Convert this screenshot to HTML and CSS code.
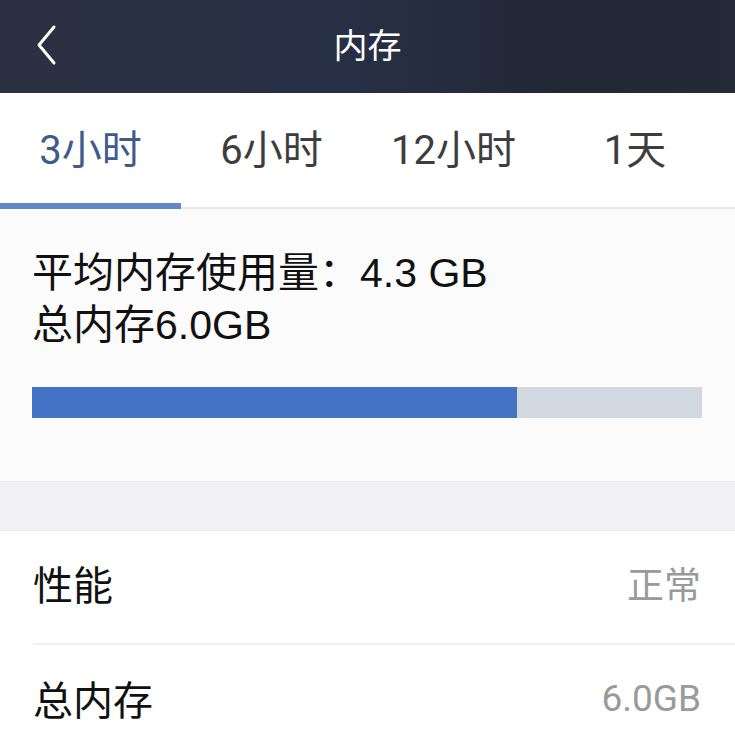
FILE: index.html
```html
<!DOCTYPE html>
<html lang="zh">
<head>
<meta charset="utf-8">
<title>内存</title>
<link rel="stylesheet" href="styles.css">
</head>
<body>
<div class="page">
  <header class="topbar">
    <span class="back">
      <svg width="24" height="42" viewBox="0 0 24 42"><path d="M19 3 L4 21 L19 39" fill="none" stroke="#ffffff" stroke-width="3" stroke-linecap="round" stroke-linejoin="round"/></svg>
    </span>
    <h1 class="title">内存</h1>
  </header>
  <nav class="tabs">
    <div class="tab active">3小时</div>
    <div class="tab">6小时</div>
    <div class="tab">12小时</div>
    <div class="tab">1天</div>
  </nav>
  <section class="summary">
    <p class="line">平均内存使用量：4.3 GB</p>
    <p class="line">总内存6.0GB</p>
    <div class="bar"><div class="fill" style="width:72.4%"></div></div>
  </section>
  <div class="gap"></div>
  <ul class="list">
    <li class="row"><span class="label">性能</span><span class="value">正常</span></li>
    <li class="row"><span class="label">总内存</span><span class="value">6.0GB</span></li>
  </ul>
</div>
</body>
</html>
```
FILE: styles.css
```css
* { box-sizing: border-box; }
html, body { margin: 0; padding: 0; }
body {
  font-family: "Liberation Sans", "Noto Sans CJK SC", sans-serif;
  background: #ffffff;
  color: #111;
  width: 735px;
  height: 745px;
  overflow: hidden;
}
.page { width: 735px; }
.topbar {
  height: 93px;
  background: linear-gradient(90deg, #2b3142 0%, #283046 45%, #222836 75%, #252a38 100%);
  display: flex;
  align-items: center;
  justify-content: center;
  position: relative;
}
.back {
  position: absolute;
  left: 35px;
  top: 24px;
  display: block;
  line-height: 0;
}
.title {
  margin: 0;
  color: #ffffff;
  font-family: "Noto Sans CJK SC", sans-serif;
  font-weight: 400;
  font-size: 34px;
  line-height: 1;
  padding-bottom: 6px;
}
.tabs {
  display: grid;
  grid-template-columns: 181px 181px 183px 190px;
  height: 116px;
  border-bottom: 2px solid #e9e9eb;
  background: #fff;
}
.tab {
  display: flex;
  align-items: center;
  justify-content: center;
  font-family: "Roboto", "Noto Sans CJK SC", sans-serif;
  font-size: 40px;
  color: #3d3d3d;
  padding-bottom: 6px;
  position: relative;
}
.tab:nth-child(4) { padding-right: 10px; }
.tab.active { color: #3e5b8c; }
.tab.active::after {
  content: "";
  position: absolute;
  left: 0;
  right: 0;
  bottom: -2px;
  height: 6px;
  background: #6088c8;
}
.summary {
  background: #fbfbfc;
  padding: 38px 33px 62px 32px;
  height: 272px;
}
.line {
  margin: 0;
  font-family: "Liberation Sans", "Noto Sans CJK SC", sans-serif;
  font-size: 41px;
  line-height: 52px;
  color: #111;
}
.bar {
  margin-top: 36px;
  height: 31px;
  width: 670px;
  background: #d2d8df;
}
.fill {
  height: 100%;
  background: #4472c4;
}
.gap {
  height: 50px;
  background: #f1f1f3;
  border-top: 1px solid #ececee;
  border-bottom: 1px solid #ececee;
}
.list {
  list-style: none;
  margin: 0;
  padding: 0 0 0 33px;
}
.row {
  display: flex;
  align-items: center;
  justify-content: space-between;
  height: 114px;
  padding-right: 34px;
  padding-bottom: 8px;
  border-bottom: 2px solid #f0f0f0;
}
.row:last-child { border-bottom: none; }
.label {
  font-family: "Noto Sans CJK SC", sans-serif;
  font-size: 40px;
  color: #111;
}
.value {
  font-family: "Roboto", "Noto Sans CJK SC", sans-serif;
  font-size: 37px;
  color: #9a9a9a;
}
```
